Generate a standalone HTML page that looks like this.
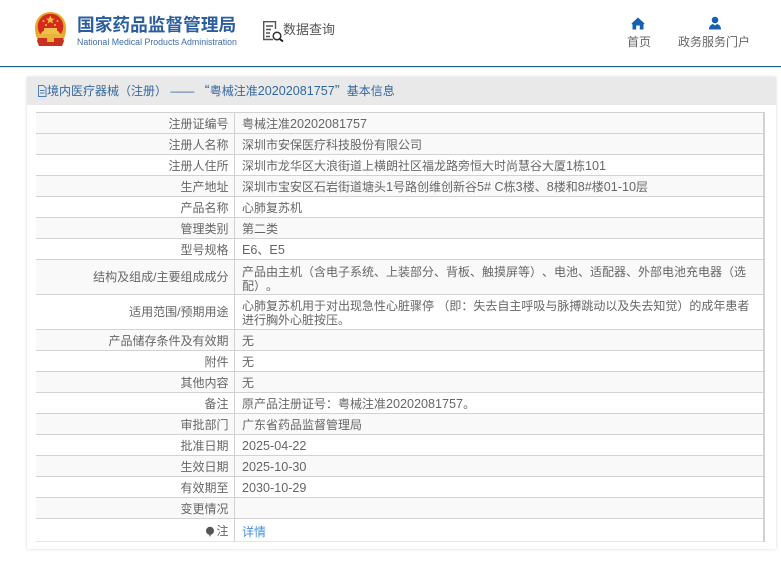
<!DOCTYPE html>
<html lang="zh"><head><meta charset="utf-8"><style>
html,body{margin:0;padding:0;background:#fff}
body{width:781px;height:564px;overflow:hidden;position:relative;font-family:"Liberation Sans","Noto Sans CJK SC",sans-serif;color:#666;font-size:12px;text-spacing-trim:space-all}
.a{position:absolute;white-space:nowrap}
.r{position:absolute;left:36px;width:727px;border-top:1px solid #d2d2d2;box-sizing:border-box}
.g{background:#f9f9f9}
.l{position:absolute;left:0;top:4px;width:192.5px;text-align:right;white-space:nowrap;line-height:14px}
.v{position:absolute;left:206px;top:4px;white-space:nowrap;line-height:14px}
.n{font-size:12.6px}
.q{font-family:"Noto Sans CJK SC",sans-serif}
</style></head><body>
<svg class="a" style="left:33px;top:11px" width="35" height="36" viewBox="0 0 35 36">
<path d="M17.5 1C26.5 1 33 8 33 17C33 23 31.500 28 28 32L7 32C3.500 28 2 23 2 17C2 8 8.500 1 17.500 1Z" fill="#e5a92c"/>
<circle cx="17.500" cy="15.500" r="12.800" fill="#d6281f"/>
<path d="M16 5.500l1.300-3 1.300 3 3 .2-2.400 1.900.8 3-2.700-1.700-2.700 1.700.8-3-2.400-1.900z" transform="translate(0 2)" fill="#f4c542"/>
<circle cx="10.500" cy="10" r="1" fill="#f4c542"/><circle cx="24.500" cy="10" r="1" fill="#f4c542"/><circle cx="13" cy="14" r="1" fill="#f4c542"/><circle cx="22" cy="14" r="1" fill="#f4c542"/>
<path d="M7.500 23L10 20H11V17H24V20H25L27.500 23Z" fill="#f1c048"/>
<rect x="5" y="23" width="25" height="4" fill="#e9b43a"/>
<path d="M5 27H30L31 30L29 35H6L4 30Z" fill="#c9301f"/>
<rect x="14" y="27" width="7" height="4" fill="#e9b43a"/>
</svg>
<div class="a" style="left:77px;top:12px;font-size:17.700px;line-height:26px;font-weight:bold;color:#2b5e9e">国家药品监督管理局</div>
<div class="a" style="left:77px;top:36px;font-size:8.800px;line-height:12px;color:#3f6ea8">National Medical Products Administration</div>
<svg class="a" style="left:262px;top:20px" width="22" height="22" viewBox="0 0 22 22" fill="none" stroke="#555" stroke-width="1.400">
<path d="M11 19.500H1.700V1.700H13.500V9"/><path d="M4 6H11M4 9.500H9M4 13H8M4 16.500H8"/><circle cx="15" cy="16" r="3.800" stroke="#333" stroke-width="1.500"/><path d="M17.800 19L21 21.500" stroke-width="2" stroke="#222"/>
</svg>
<div class="a" style="left:283px;top:20px;font-size:13px;line-height:20px;color:#555">数据查询</div>
<svg class="a" style="left:631px;top:17px" width="14" height="13" viewBox="0 0 14 13"><path d="M7 .5L13.500 6.500L12.500 7.500V12.500H8.800V8.500H5.200V12.500H1.500V7.500L.5 6.500Z" fill="#1560b0"/></svg>
<svg class="a" style="left:708px;top:16px" width="14" height="14" viewBox="0 0 14 14"><circle cx="7" cy="4" r="3.300" fill="#1560b0"/><path d="M1 13.500C1 10 3 8.500 5 8L7 9.500L9 8C11 8.500 13 10 13 13.500Z" fill="#1560b0"/></svg>
<div class="a" style="left:627px;top:34px;line-height:16px">首页</div>
<div class="a" style="left:678px;top:34px;line-height:16px">政务服务门户</div>
<div class="a" style="left:0;top:66px;width:781px;height:1px;background:#1b639f"></div>
<div class="a" style="left:0;top:67px;width:781px;height:1px;background:#dfe7ee"></div>

<div class="a" style="left:27px;top:77px;width:749px;height:472px;background:#fff;box-shadow:0 0 3px rgba(0,0,0,.16)"></div>
<div class="a" style="left:27px;top:77px;width:749px;height:28px;background:#e9e9e9"></div>
<svg class="a" style="left:37px;top:85px" width="10" height="12" viewBox="0 0 10 12" fill="none" stroke="#4c7fb8"><path d="M1.500 .5H6.500L9 3V11.500H1.500Z"/><path d="M3 5.500H7.500M3 8H7.500"/></svg>
<div class="a" style="left:47px;top:83px;line-height:16px;color:#33689f">境内医疗器械（注册） —— <span class="q">“</span>粤械注准<span class="n">20202081757</span><span class="q">”</span>基本信息</div>

<div class="r g" style="top:112px;height:21px"><div class="l">注册证编号</div><div class="v">粤械注准<span class="n">20202081757</span></div></div>
<div class="r g" style="top:133px;height:21px"><div class="l">注册人名称</div><div class="v">深圳市安保医疗科技股份有限公司</div></div>
<div class="r" style="top:154px;height:21px"><div class="l">注册人住所</div><div class="v">深圳市龙华区大浪街道上横朗社区福龙路旁恒大时尚慧谷大厦<span class="n">1</span>栋<span class="n">101</span></div></div>
<div class="r g" style="top:175px;height:21px"><div class="l">生产地址</div><div class="v">深圳市宝安区石岩街道塘头<span class="n">1</span>号路创维创新谷<span class="n">5# C</span>栋<span class="n">3</span>楼、<span class="n">8</span>楼和<span class="n">8#</span>楼<span class="n">01-10</span>层</div></div>
<div class="r" style="top:196px;height:21px"><div class="l">产品名称</div><div class="v">心肺复苏机</div></div>
<div class="r g" style="top:217px;height:21px"><div class="l">管理类别</div><div class="v">第二类</div></div>
<div class="r" style="top:238px;height:21px"><div class="l">型号规格</div><div class="v"><span class="n">E6</span>、<span class="n">E5</span></div></div>
<div class="r g" style="top:259px;height:35px"><div class="l" style="top:10px">结构及组成/主要组成成分</div><div class="v" style="top:5px">产品由主机（含电子系统、上装部分、背板、触摸屏等）、电池、适配器、外部电池充电器（选<br>配）。</div></div>
<div class="r" style="top:294px;height:35px"><div class="l" style="top:10px">适用范围/预期用途</div><div class="v" style="top:4px">心肺复苏机用于对出现急性心脏骤停 （即：失去自主呼吸与脉搏跳动以及失去知觉）的成年患者<br>进行胸外心脏按压。</div></div>
<div class="r g" style="top:329px;height:21px"><div class="l">产品储存条件及有效期</div><div class="v">无</div></div>
<div class="r" style="top:350px;height:21px"><div class="l">附件</div><div class="v">无</div></div>
<div class="r g" style="top:371px;height:21px"><div class="l">其他内容</div><div class="v">无</div></div>
<div class="r" style="top:392px;height:21px"><div class="l">备注</div><div class="v">原产品注册证号：粤械注准<span class="n">20202081757</span>。</div></div>
<div class="r g" style="top:413px;height:21px"><div class="l">审批部门</div><div class="v">广东省药品监督管理局</div></div>
<div class="r" style="top:434px;height:21px"><div class="l">批准日期</div><div class="v n">2025-04-22</div></div>
<div class="r g" style="top:455px;height:21px"><div class="l">生效日期</div><div class="v n">2025-10-30</div></div>
<div class="r" style="top:476px;height:21px"><div class="l">有效期至</div><div class="v n">2030-10-29</div></div>
<div class="r g" style="top:497px;height:21px"><div class="l">变更情况</div></div>
<div class="r" style="top:518px;height:24px;border-bottom:1px solid #e6e6e6"><div class="l" style="top:5px">注</div><div class="v" style="top:6px;color:#4a90d9">详情</div></div>
<svg class="a" style="left:205px;top:526px" width="10" height="12" viewBox="0 0 10 12"><circle cx="5" cy="4.800" r="4" fill="#555"/><path d="M3.500 8.500H6.500L5 11Z" fill="#888"/></svg>
<div class="a" style="left:234px;top:112px;width:1px;height:430px;background:#d2d2d2"></div>
<div class="a" style="left:763px;top:112px;width:2px;height:430px;background:#d2d2d2"></div>
</body></html>
